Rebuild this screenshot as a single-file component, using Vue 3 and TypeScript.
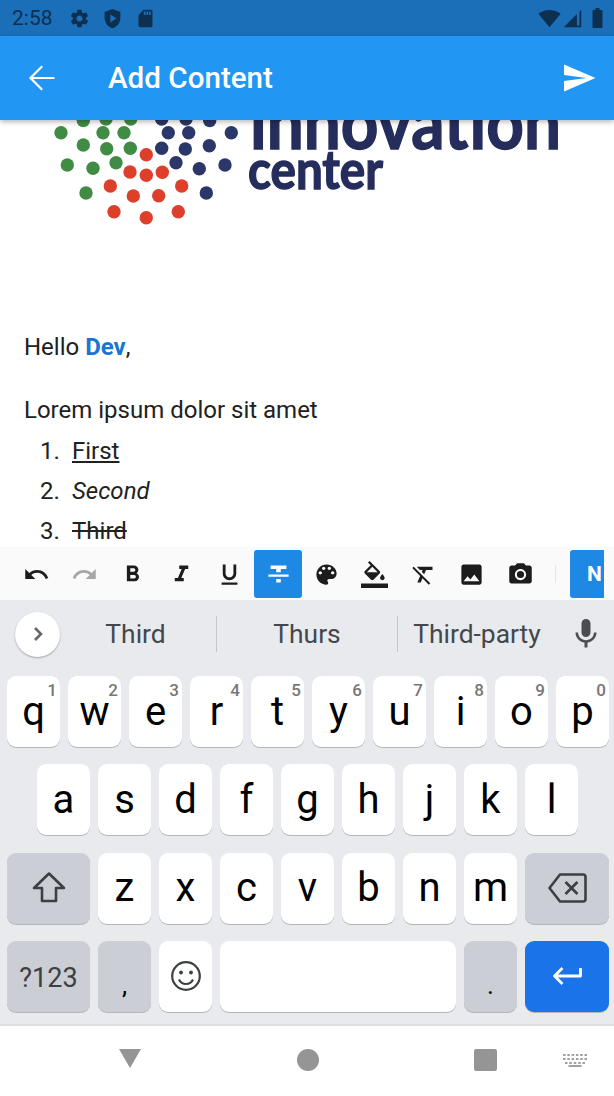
<script setup lang="ts">
interface Dot {
  x: number
  y: number
}

interface ToolIcon {
  name: string
  path: string
  muted?: boolean
  active?: boolean
}

const greenDots: Dot[] = [
  { x: 61, y: 132.7 }, { x: 83.3, y: 120.5 }, { x: 106, y: 119 }, { x: 130.7, y: 119 },
  { x: 103, y: 132.7 }, { x: 124, y: 132.7 }, { x: 83.3, y: 145 }, { x: 106.7, y: 148.7 },
  { x: 130.3, y: 148.3 }, { x: 67.3, y: 165 }, { x: 93, y: 168.3 }, { x: 116, y: 162.7 },
  { x: 86, y: 193 },
]
const redDots: Dot[] = [
  { x: 146.3, y: 154.7 }, { x: 130, y: 172 }, { x: 146.3, y: 175.3 }, { x: 162.3, y: 172.3 },
  { x: 110.3, y: 186 }, { x: 133.3, y: 196 }, { x: 158.7, y: 195.7 }, { x: 181.7, y: 186 },
  { x: 114, y: 211.7 }, { x: 146.3, y: 217.7 }, { x: 178.3, y: 211.7 },
]
const blueDots: Dot[] = [
  { x: 161.7, y: 119 }, { x: 186, y: 119 }, { x: 209.7, y: 120.5 }, { x: 168.3, y: 132.7 },
  { x: 188.7, y: 132.7 }, { x: 231.3, y: 132.7 }, { x: 161.7, y: 148.3 }, { x: 185.3, y: 149 },
  { x: 209.3, y: 145.7 }, { x: 176, y: 162.7 }, { x: 199.3, y: 168.7 }, { x: 225, y: 165 },
  { x: 206.3, y: 193 },
]

const tools: ToolIcon[] = [
  { name: 'undo', path: 'M12.5 8c-2.65 0-5.05.99-6.9 2.6L2 7v9h9l-3.62-3.62c1.39-1.16 3.16-1.88 5.12-1.88 3.54 0 6.55 2.31 7.6 5.5l2.37-.78C21.08 11.03 17.15 8 12.5 8z' },
  { name: 'redo', muted: true, path: 'M18.4 10.6C16.55 8.99 14.15 8 11.5 8c-4.65 0-8.58 3.03-9.96 7.22L3.9 16c1.05-3.19 4.05-5.5 7.6-5.5 1.95 0 3.73.72 5.12 1.88L13 16h9V7l-3.6 3.6z' },
  { name: 'bold', path: 'M15.6 10.79c.97-.67 1.65-1.77 1.65-2.79 0-2.26-1.75-4-4-4H7v14h7.04c2.09 0 3.71-1.7 3.71-3.79 0-1.52-.86-2.82-2.15-3.42zM10 6.5h3c.83 0 1.5.67 1.5 1.5s-.67 1.5-1.5 1.5h-3v-3zm3.5 9H10v-3h3.5c.83 0 1.5.67 1.5 1.5s-.67 1.5-1.5 1.5z' },
  { name: 'italic', path: 'M10 4v3h2.21l-3.42 8H6v3h8v-3h-2.21l3.42-8H18V4z' },
  { name: 'underline', path: 'M12 17c3.31 0 6-2.69 6-6V3h-2.5v8c0 1.93-1.57 3.5-3.5 3.5S8.5 12.93 8.5 11V3H6v8c0 3.31 2.69 6 6 6zm-7 2v2h14v-2H5z' },
  { name: 'strike', active: true, path: 'M10 19h4v-3h-4v3zM5 4v3h5v3h4V7h5V4H5zM3 14h18v-2H3v2z' },
  { name: 'palette', path: 'M12 3c-4.97 0-9 4.03-9 9s4.03 9 9 9c.83 0 1.5-.67 1.5-1.5 0-.39-.15-.74-.39-1.01-.23-.26-.38-.61-.38-.99 0-.83.67-1.5 1.5-1.5H16c2.76 0 5-2.24 5-5 0-4.42-4.03-8-9-8zm-5.5 9c-.83 0-1.5-.67-1.5-1.5S5.67 9 6.5 9 8 9.67 8 10.5 7.33 12 6.5 12zm3-4C8.67 8 8 7.33 8 6.5S8.67 5 9.5 5s1.5.67 1.5 1.5S10.33 8 9.5 8zm5 0c-.83 0-1.5-.67-1.5-1.5S13.67 5 14.5 5s1.5.67 1.5 1.5S15.33 8 14.5 8zm3 4c-.83 0-1.5-.67-1.5-1.5S16.67 9 17.5 9s1.5.67 1.5 1.5-.67 1.5-1.5 1.5z' },
  { name: 'fill', path: 'M16.56 8.94L7.62 0 6.21 1.41l2.38 2.38-5.15 5.15c-.59.59-.59 1.54 0 2.12l5.5 5.5c.29.29.68.44 1.06.44s.77-.15 1.06-.44l5.5-5.5c.59-.58.59-1.53 0-2.12zM5.21 10L10 5.21 14.79 10H5.21zM19 11.5s-2 2.17-2 3.5c0 1.1.9 2 2 2s2-.9 2-2c0-1.33-2-3.5-2-3.5zM0 20h24v4H0z' },
  { name: 'clear', path: 'M3.27 5L2 6.27l6.97 6.97L6.5 19h3l1.57-3.66L16.73 21 18 19.73 3.55 5.27 3.27 5zM6 5v.18L8.82 8h2.4l-.72 1.68 2.1 2.1L14.21 8H20V5H6z' },
  { name: 'image', path: 'M21 19V5c0-1.1-.9-2-2-2H5c-1.1 0-2 .9-2 2v14c0 1.1.9 2 2 2h14c1.1 0 2-.9 2-2zM8.5 13.5l2.5 3.01L14.5 12l4.5 6H5l3.5-4.5z' },
  { name: 'camera', path: 'M12 8.8a3.2 3.2 0 1 0 0 6.4 3.2 3.2 0 0 0 0-6.4zM9 2L7.17 4H4c-1.1 0-2 .9-2 2v12c0 1.1.9 2 2 2h16c1.1 0 2-.9 2-2V6c0-1.1-.9-2-2-2h-3.17L15 2H9zm3 15c-2.76 0-5-2.24-5-5s2.24-5 5-5 5 2.24 5 5-2.24 5-5 5z' },
]

const topRow = ['q', 'w', 'e', 'r', 't', 'y', 'u', 'i', 'o', 'p']
const hints = ['1', '2', '3', '4', '5', '6', '7', '8', '9', '0']
const homeRow = ['a', 's', 'd', 'f', 'g', 'h', 'j', 'k', 'l']
const bottomRow = ['z', 'x', 'c', 'v', 'b', 'n', 'm']
</script>

<template>
  <div class="phone">
    <header class="status">
      <span class="time">2:58</span>
      <div class="status-left">
        <svg class="st" viewBox="0 0 24 24"><path d="M19.43 12.98c.04-.32.07-.64.07-.98s-.03-.66-.07-.98l2.11-1.65c.19-.15.24-.42.12-.64l-2-3.46c-.12-.22-.39-.3-.61-.22l-2.49 1c-.52-.4-1.08-.73-1.69-.98l-.38-2.65C14.46 2.18 14.25 2 14 2h-4c-.25 0-.46.18-.49.42l-.38 2.65c-.61.25-1.17.59-1.69.98l-2.49-1c-.23-.09-.49 0-.61.22l-2 3.46c-.13.22-.07.49.12.64l2.11 1.65c-.04.32-.07.65-.07.98s.03.66.07.98l-2.11 1.65c-.19.15-.24.42-.12.64l2 3.46c.12.22.39.3.61.22l2.49-1c.52.4 1.08.73 1.69.98l.38 2.65c.03.24.24.42.49.42h4c.25 0 .46-.18.49-.42l.38-2.65c.61-.25 1.17-.59 1.69-.98l2.49 1c.23.09.49 0 .61-.22l2-3.46c.12-.22.07-.49-.12-.64l-2.11-1.65zM12 15.5c-1.93 0-3.5-1.57-3.5-3.5s1.57-3.5 3.5-3.5 3.5 1.57 3.5 3.5-1.57 3.5-3.5 3.5z" /></svg>
        <svg class="st" viewBox="0 0 24 24"><path fill-rule="evenodd" d="M12 1L3 4.5v6.5c0 5.55 3.84 10.74 9 12 5.16-1.26 9-6.45 9-12V4.5L12 1zM9.5 7.5l7 4.5-7 4.5v-9z" /></svg>
        <svg class="st" viewBox="0 0 24 24"><path d="M18 2h-8L4.02 8 4 20c0 1.1.9 2 2 2h12c1.1 0 2-.9 2-2V4c0-1.1-.9-2-2-2zm-6 6h-2V4h2v4zm3 0h-2V4h2v4zm3 0h-2V4h2v4z" /></svg>
      </div>
      <div class="status-right">
        <svg class="st-wifi" viewBox="0 0 24 24"><path d="M12 21L23.64 7C23.19 6.66 18.71 3 12 3 5.28 3 .81 6.66.36 7L12 21z" /></svg>
        <svg class="st-signal" viewBox="0 0 24 24"><path d="M2 22h20V2L2 22zm18-2h-3V7l3-3v16z" /></svg>
        <svg class="st-battery" viewBox="7 2 10 20"><path d="M15.67 4H14V2h-4v2H8.33C7.6 4 7 4.6 7 5.33v15.33C7 21.4 7.6 22 8.33 22h7.33c.74 0 1.34-.6 1.34-1.33V5.33C17 4.6 16.4 4 15.67 4z" /></svg>
      </div>
    </header>

    <nav class="appbar">
      <svg class="back" viewBox="0 0 24 24"><path d="M23.500 12H3M13 2L3 12l10 10" /></svg>
      <h1 class="title">Add Content</h1>
      <svg class="send" viewBox="0 0 24 24"><path d="M2.01 21L23 12 2.01 3 2 10l15 2-15 2z" /></svg>
    </nav>

    <main class="content">
      <svg class="logo" viewBox="0 120 614 110">
        <text class="logo-big" x="250" y="149" textLength="311" lengthAdjust="spacingAndGlyphs">innovation</text>
        <text class="logo-small" x="248" y="189" textLength="135" lengthAdjust="spacingAndGlyphs">center</text>
        <circle v-for="(d, i) in greenDots" :key="`g${i}`" :cx="d.x" :cy="d.y" r="6.7" fill="#418c44" />
        <circle v-for="(d, i) in redDots" :key="`r${i}`" :cx="d.x" :cy="d.y" r="6.7" fill="#dd3f2b" />
        <circle v-for="(d, i) in blueDots" :key="`b${i}`" :cx="d.x" :cy="d.y" r="6.7" fill="#2a3768" />
      </svg>
      <p class="hello">Hello <b class="name">Dev</b>,</p>
      <p class="lorem">Lorem ipsum dolor sit amet</p>
      <ol class="list">
        <li><span class="num">1.</span><u>First</u></li>
        <li><span class="num">2.</span><i>Second</i></li>
        <li><span class="num">3.</span><s>Third</s></li>
      </ol>
    </main>

    <div class="toolbar">
      <div class="tools">
        <button
          v-for="tool in tools"
          :key="tool.name"
          class="tool"
          :class="{ muted: tool.muted, active: tool.active }"
        >
          <svg class="tool-icon" viewBox="0 0 24 24"><path :d="tool.path" /></svg>
        </button>
        <span class="tool-divider" />
        <button class="tool-n">N</button>
      </div>
    </div>

    <section class="keyboard">
      <div class="suggestions">
        <span class="chevron">
          <svg viewBox="0 0 24 24" width="24" height="24"><path d="M9 6l6 6-6 6" /></svg>
        </span>
        <span class="sug">Third</span>
        <span class="sug sep">Thurs</span>
        <span class="sug sep">Third-party</span>
        <svg class="mic" viewBox="0 0 24 24"><path d="M12 14c1.66 0 2.99-1.34 2.99-3L15 5c0-1.66-1.34-3-3-3S9 3.34 9 5v6c0 1.66 1.34 3 3 3zm5.3-3c0 3-2.54 5.1-5.3 5.1S6.7 14 6.7 11H5c0 3.41 2.72 6.23 6 6.72V21h2v-3.28c3.28-.48 6-3.3 6-6.72h-1.7z" /></svg>
      </div>

      <div class="rows">
        <div class="row">
          <div v-for="(k, i) in topRow" :key="k" class="key">
            {{ k }}<span class="hint">{{ hints[i] }}</span>
          </div>
        </div>
        <div class="row home">
          <div v-for="k in homeRow" :key="k" class="key">{{ k }}</div>
        </div>
        <div class="row">
          <div class="key wide left special">
            <svg class="kb-icon" viewBox="0 0 36 34"><path d="M18 2.5L3 17h8v13h14V17h8L18 2.5z" /></svg>
          </div>
          <div v-for="k in bottomRow" :key="k" class="key">{{ k }}</div>
          <div class="key wide special">
            <svg class="kb-icon del" viewBox="0 0 40 32"><path d="M13 2.5h23a2.5 2.5 0 0 1 2.5 2.5v22a2.5 2.5 0 0 1-2.5 2.5H13L2.5 16 13 2.5zM18.5 10l12 12M30.5 10l-12 12" /></svg>
          </div>
        </div>
        <div class="row">
          <div class="key wide left special sym">?123</div>
          <div class="key special punct">,</div>
          <div class="key">
            <svg class="kb-icon emoji" viewBox="0 0 32 32">
              <circle cx="16" cy="16" r="13.8" />
              <path d="M9 19.5c1.4 3 4 4.5 7 4.5s5.600-1.500 7-4.500" />
              <circle class="eye" cx="11" cy="12.500" r="1.900" />
              <circle class="eye" cx="21" cy="12.500" r="1.900" />
            </svg>
          </div>
          <div class="key space" />
          <div class="key special punct">.</div>
          <div class="key wide enter">
            <svg class="kb-icon ret" viewBox="0 0 30 20"><path d="M28.500 2v8H3M10.500 2L2.500 10l8 8" /></svg>
          </div>
        </div>
      </div>
    </section>

    <footer class="navbar">
      <svg class="nav-back" viewBox="0 0 24 21"><path d="M1 1h22L12 20z" /></svg>
      <span class="nav-home" />
      <span class="nav-recent" />
      <svg class="nav-kb" viewBox="0 0 24 13">
        <path d="M0 0h2.500v2H0zM4.300 0h2.500v2H4.300zM8.600 0h2.500v2H8.600zM12.900 0h2.500v2h-2.500zM17.200 0h2.500v2h-2.500zM21.500 0H24v2h-2.500zM0 4h2.500v2H0zM4.300 4h2.500v2H4.300zM8.600 4h2.500v2H8.600zM12.900 4h2.500v2h-2.500zM17.200 4h2.500v2h-2.500zM21.500 4H24v2h-2.500zM2 8h2.500v2H2zM6.300 8h2.500v2H6.300zM10.800 8h2.500v2h-2.500zM15.200 8h2.500v2h-2.500zM19.500 8H22v2h-2.500zM5.500 11h13v2h-13z" />
      </svg>
    </footer>
  </div>
</template>

<style scoped>
.phone {
  width: 614px;
  height: 1096px;
  display: flex;
  flex-direction: column;
  overflow: hidden;
  background: #fff;
  font-family: Roboto, "Noto Sans", sans-serif;
  color: #212121;
}

.status {
  flex: none;
  height: 36px;
  display: flex;
  align-items: center;
  padding: 0 11px 0 12px;
  background: #1a6fb8;
  color: #0d2f50;
}

.time {
  width: 57px;
  font-size: 21px;
}

.status-left {
  display: flex;
  gap: 12px;
}

.st {
  width: 21px;
  height: 21px;
  fill: #0d2f50;
}

.status-right {
  margin-left: auto;
  display: flex;
  align-items: center;
}

.st-wifi {
  width: 23px;
  height: 23px;
  fill: #0d2f50;
}

.st-signal {
  width: 21px;
  height: 21px;
  margin-left: 1px;
  fill: #0d2f50;
}

.st-battery {
  width: 11px;
  height: 20px;
  margin-left: 9px;
  fill: #0d2f50;
}

.appbar {
  flex: none;
  position: relative;
  z-index: 2;
  height: 84px;
  display: flex;
  align-items: center;
  background: #2196f3;
  box-shadow: 0 2px 5px rgba(0, 0, 0, 0.28);
  color: #fff;
}

.back {
  width: 28px;
  height: 28px;
  margin-left: 27px;
  fill: none;
  stroke: #fff;
  stroke-width: 1.9;
}

.title {
  margin: 0 0 0 53px;
  font-size: 29.6px;
  font-weight: 500;
}

.send {
  width: 36px;
  height: 36px;
  margin-left: auto;
  margin-right: 17px;
  fill: #fff;
}

.content {
  flex: none;
  height: 427px;
  overflow: hidden;
  font-size: 24px;
  line-height: 40px;
}

.logo {
  display: block;
  width: 614px;
  height: 110px;
}

.logo-big,
.logo-small {
  font-family: Lato, sans-serif;
  font-weight: 700;
  fill: #252d5c;
  stroke: #252d5c;
}

.logo-big {
  font-size: 74px;
  stroke-width: 1.4;
}

.logo-small {
  font-size: 54px;
  stroke-width: 1.4;
}

.hello {
  margin: 97px 0 0;
  padding-left: 24px;
}

.name {
  color: #1976d2;
  font-weight: 700;
}

.lorem {
  margin: 23px 0 0;
  padding-left: 24px;
}

.list {
  margin: 1px 0 0;
  padding: 0;
  list-style: none;
}

.list li {
  display: flex;
}

.list u {
  text-underline-offset: 2px;
}

.num {
  width: 72px;
  padding-left: 40px;
  box-sizing: border-box;
}

.toolbar {
  flex: none;
  height: 53px;
  padding: 3px 10px 2px 12px;
  box-sizing: border-box;
  background: #fafafa;
}

.tools {
  height: 48px;
  display: flex;
  align-items: center;
  overflow: hidden;
}

.tool {
  flex: none;
  width: 48.4px;
  height: 48px;
  padding: 0;
  display: flex;
  align-items: center;
  justify-content: center;
  border: 0;
  border-radius: 3px;
  background: none;
}

.tool-icon {
  width: 27px;
  height: 27px;
  fill: #1c1c1c;
}

.tool.muted .tool-icon {
  fill: #a6a6a6;
}

.tool.active {
  background: #1e88e5;
}

.tool.active .tool-icon {
  fill: #fff;
}

.tool-divider {
  flex: none;
  width: 1px;
  height: 18px;
  margin: 0 14px 0 11px;
  background: #e5e5e5;
}

.tool-n {
  flex: none;
  width: 48px;
  height: 48px;
  padding: 0;
  border: 0;
  border-radius: 3px;
  background: #1e88e5;
  color: #fff;
  font-family: Roboto, sans-serif;
  font-size: 21px;
  font-weight: 700;
}

.keyboard {
  flex: none;
  height: 424px;
  border-bottom: 2px solid #e0e0e0;
  background: #e8eaed;
}

.suggestions {
  height: 68px;
  margin-bottom: 8px;
  display: grid;
  grid-template-columns: 55px 161px 181px 159px 1fr;
  align-items: center;
  color: #44474b;
  font-size: 26.4px;
}

.chevron {
  width: 45px;
  height: 45px;
  margin-left: 15px;
  display: flex;
  align-items: center;
  justify-content: center;
  border-radius: 50%;
  background: #fff;
  box-shadow: 0 1px 2px rgba(0, 0, 0, 0.3);
}

.chevron svg {
  fill: none;
  stroke: #666;
  stroke-width: 2.6;
}

.sug {
  height: 36px;
  display: flex;
  align-items: center;
  justify-content: center;
  box-sizing: border-box;
}

.sug.sep {
  border-left: 1.5px solid #c4c6cb;
}

.mic {
  width: 36px;
  height: 36px;
  margin-left: 12px;
  fill: #4a4d52;
}

.rows {
  display: flex;
  flex-direction: column;
  gap: 17.3px;
  padding-left: 7px;
}

.row {
  display: flex;
  gap: 8px;
}

.row.home {
  padding-left: 30px;
}

.key {
  flex: none;
  position: relative;
  width: 53px;
  height: 71px;
  display: flex;
  align-items: center;
  justify-content: center;
  border-radius: 9px;
  background: #fff;
  box-shadow: 0 1px 0 #b4b6ba;
  color: #000;
  font-size: 40px;
  line-height: 1;
}

.hint {
  position: absolute;
  top: 6px;
  right: 3px;
  color: #777;
  font-size: 17px;
  font-weight: 500;
}

.wide {
  width: 84px;
}

.wide.left {
  width: 83px;
}

.special {
  background: #ccced5;
}

.sym {
  padding-top: 4px;
  box-sizing: border-box;
  color: #3c4043;
  font-size: 27px;
}

.punct {
  align-items: flex-end;
  padding-bottom: 14px;
  box-sizing: border-box;
  font-size: 26px;
}

.space {
  width: 236px;
}

.enter {
  background: #1a73e8;
  box-shadow: 0 1px 0 #b4b6ba;
}

.kb-icon {
  width: 36px;
  height: 34px;
  fill: none;
  stroke: #3c4043;
  stroke-width: 2.6;
  stroke-linejoin: round;
}

.kb-icon.del {
  width: 40px;
  height: 32px;
}

.kb-icon.emoji {
  width: 32px;
  height: 32px;
  stroke-width: 2.2;
}

.eye {
  fill: #3c4043;
  stroke: none;
}

.kb-icon.ret {
  width: 30px;
  height: 20px;
  stroke: #fff;
  stroke-width: 2.8;
}

.navbar {
  flex: 1;
  position: relative;
  background: #fff;
}

.nav-back {
  position: absolute;
  left: 118px;
  top: 22px;
  width: 24px;
  height: 21px;
  fill: #959595;
}

.nav-home {
  position: absolute;
  left: 297px;
  top: 23px;
  width: 22px;
  height: 22px;
  border-radius: 50%;
  background: #959595;
}

.nav-recent {
  position: absolute;
  left: 474px;
  top: 23px;
  width: 23px;
  height: 22px;
  border-radius: 2px;
  background: #959595;
}

.nav-kb {
  position: absolute;
  left: 563px;
  top: 28px;
  width: 24px;
  height: 13px;
  fill: #a0a0a0;
}
</style>

<style>
html,
body {
  margin: 0;
  background: #fff;
}
</style>
